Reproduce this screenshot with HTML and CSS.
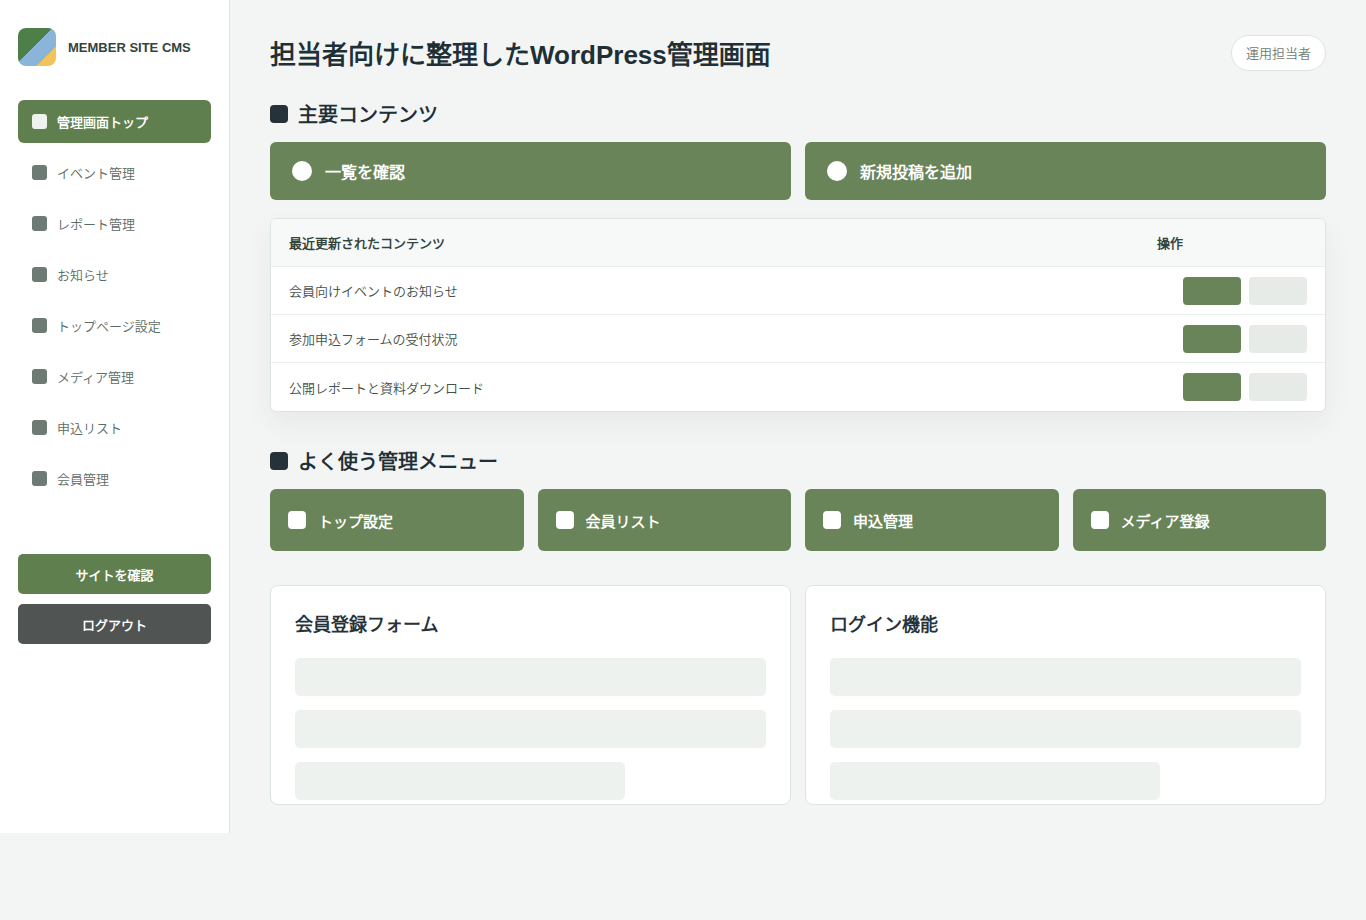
FILE: index.html
```
<!DOCTYPE html>
<html lang="ja">
<head>
  <meta charset="UTF-8">
  <meta name="viewport" content="width=device-width, initial-scale=1.0">
  <title>MEMBER SITE CMS</title>
  <link rel="stylesheet" href="styles.css">
</head>
<body>
  <div class="layout">
    <!-- Sidebar -->
    <aside class="sidebar">
      <div class="brand">
        <span class="brand-mark"></span>
        <span>MEMBER SITE CMS</span>
      </div>
      <nav class="nav">
        <a class="nav-item active">管理画面トップ</a>
        <a class="nav-item">イベント管理</a>
        <a class="nav-item">レポート管理</a>
        <a class="nav-item">お知らせ</a>
        <a class="nav-item">トップページ設定</a>
        <a class="nav-item">メディア管理</a>
        <a class="nav-item">申込リスト</a>
        <a class="nav-item">会員管理</a>
      </nav>
      <div class="side-actions">
        <a class="side-button">サイトを確認</a>
        <a class="side-button dark">ログアウト</a>
      </div>
    </aside>

    <!-- Main -->
    <main class="main">
      <header class="topbar">
        <h1>担当者向けに整理したWordPress管理画面</h1>
        <span class="user">運用担当者</span>
      </header>

      <h2>主要コンテンツ</h2>
      <div class="primary-actions">
        <a class="primary">一覧を確認</a>
        <a class="primary">新規投稿を追加</a>
      </div>

      <div class="table">
        <div class="row head">
          <span>最近更新されたコンテンツ</span>
          <span>操作</span>
        </div>
        <div class="row">
          <span>会員向けイベントのお知らせ</span>
          <span class="ops"><i></i><i></i></span>
        </div>
        <div class="row">
          <span>参加申込フォームの受付状況</span>
          <span class="ops"><i></i><i></i></span>
        </div>
        <div class="row">
          <span>公開レポートと資料ダウンロード</span>
          <span class="ops"><i></i><i></i></span>
        </div>
      </div>

      <h2>よく使う管理メニュー</h2>
      <div class="menu-grid">
        <a class="menu">トップ設定</a>
        <a class="menu">会員リスト</a>
        <a class="menu">申込管理</a>
        <a class="menu">メディア登録</a>
      </div>

      <div class="cards">
        <section class="card">
          <h3>会員登録フォーム</h3>
          <div class="field"></div>
          <div class="field"></div>
          <div class="field short"></div>
        </section>
        <section class="card">
          <h3>ログイン機能</h3>
          <div class="field"></div>
          <div class="field"></div>
          <div class="field short"></div>
        </section>
      </div>
    </main>
  </div>
</body>
</html>
```
FILE: styles.css
```
* {
  box-sizing: border-box;
}

body {
  margin: 0;
  background: #f3f5f4;
  color: #1f2f36;
  font-family: "Liberation Sans", "Noto Sans CJK JP DemiLight", "Noto Sans CJK JP", sans-serif;
}

h1, h2, h3 {
  margin: 0;
}

.layout {
  display: grid;
  grid-template-columns: 230px 1fr;
}

.sidebar {
  padding: 28px 18px;
  background: #fff;
  border-right: 1px solid #dde3e2;
}

.brand {
  display: flex;
  align-items: center;
  gap: 12px;
  margin-bottom: 34px;
  color: #31443d;
  font-size: 13px;
  font-weight: 700;
}

.brand-mark {
  width: 38px;
  height: 38px;
  border-radius: 8px;
  background: linear-gradient(135deg, #4f7f48 0 45%, #8ab4d8 45% 74%, #f1c35b 74%);
}

.nav {
  display: grid;
  gap: 8px;
}

.nav-item {
  display: flex;
  align-items: center;
  gap: 10px;
  height: 43px;
  padding: 0 14px;
  border-radius: 6px;
  color: #5c6b65;
  font-size: 13px;
}

.nav-item::before {
  content: "";
  width: 15px;
  height: 15px;
  border-radius: 3px;
  background: #6d7b74;
}

.nav-item.active {
  background: #607f4f;
  color: #fff;
  font-weight: 700;
}

.nav-item.active::before {
  background: #eff2ed;
}

.side-actions {
  display: grid;
  gap: 10px;
  margin-top: 54px;
}

.side-button {
  display: flex;
  align-items: center;
  justify-content: center;
  height: 40px;
  border-radius: 5px;
  background: #607f4f;
  color: #fff;
  font-size: 13px;
  font-weight: 700;
}

.side-button.dark {
  background: #505453;
}

.main {
  padding: 34px 40px 28px;
}

.topbar {
  display: flex;
  align-items: center;
  justify-content: space-between;
  height: 37px;
  margin-bottom: 28px;
}

h1 {
  font-size: 26px;
}

.user {
  display: flex;
  align-items: center;
  height: 36px;
  padding: 0 14px;
  border: 1px solid #dce5e2;
  border-radius: 18px;
  background: #fff;
  color: #6d7b74;
  font-size: 13px;
}

h2 {
  display: flex;
  align-items: center;
  gap: 10px;
  height: 29px;
  margin-bottom: 14px;
  font-size: 20px;
}

h2::before {
  content: "";
  width: 18px;
  height: 18px;
  border-radius: 4px;
  background: #263238;
}

.primary-actions,
.cards {
  display: grid;
  grid-template-columns: 1fr 1fr;
  gap: 14px;
}

.primary {
  display: flex;
  align-items: center;
  gap: 13px;
  height: 58px;
  padding: 0 22px;
  border-radius: 6px;
  background: #6a8459;
  color: #fff;
  font-size: 16px;
  font-weight: 700;
}

.primary::before {
  content: "";
  width: 20px;
  height: 20px;
  border-radius: 50%;
  background: #fff;
}

.table {
  margin: 18px 0 34px;
  overflow: hidden;
  border: 1px solid #dce5e2;
  border-radius: 6px;
  background: #fff;
  box-shadow: 0 12px 28px rgba(38, 50, 56, 0.06);
}

.row {
  display: grid;
  grid-template-columns: 1fr 150px;
  align-items: center;
  height: 48px;
  padding: 0 18px;
  border-bottom: 1px solid #e8eeec;
  color: #43504b;
  font-size: 13px;
}

.row:last-child {
  border-bottom: 0;
}

.row.head {
  background: #f7f9f8;
  color: #31443d;
  font-weight: 700;
}

.ops {
  display: flex;
  justify-content: flex-end;
  gap: 8px;
}

.ops i {
  width: 58px;
  height: 28px;
  border-radius: 4px;
  background: #6a8459;
}

.ops i + i {
  background: #e6ebe8;
}

.menu-grid {
  display: grid;
  grid-template-columns: repeat(4, 1fr);
  gap: 14px;
  margin-bottom: 34px;
}

.menu {
  display: flex;
  align-items: center;
  gap: 12px;
  height: 62px;
  padding: 0 18px;
  border-radius: 6px;
  background: #6a8459;
  color: #fff;
  font-size: 15px;
  font-weight: 700;
}

.menu::before {
  content: "";
  width: 18px;
  height: 18px;
  border-radius: 4px;
  background: #fff;
}

.card {
  height: 220px;
  padding: 24px;
  border: 1px solid #dce5e2;
  border-radius: 8px;
  background: #fff;
}

h3 {
  height: 26px;
  margin-bottom: 22px;
  color: #263238;
  font-size: 18px;
}

.field {
  height: 38px;
  margin-bottom: 14px;
  border-radius: 5px;
  background: #edf2ee;
}

.field.short {
  width: 70%;
  margin-bottom: 0;
}
```
